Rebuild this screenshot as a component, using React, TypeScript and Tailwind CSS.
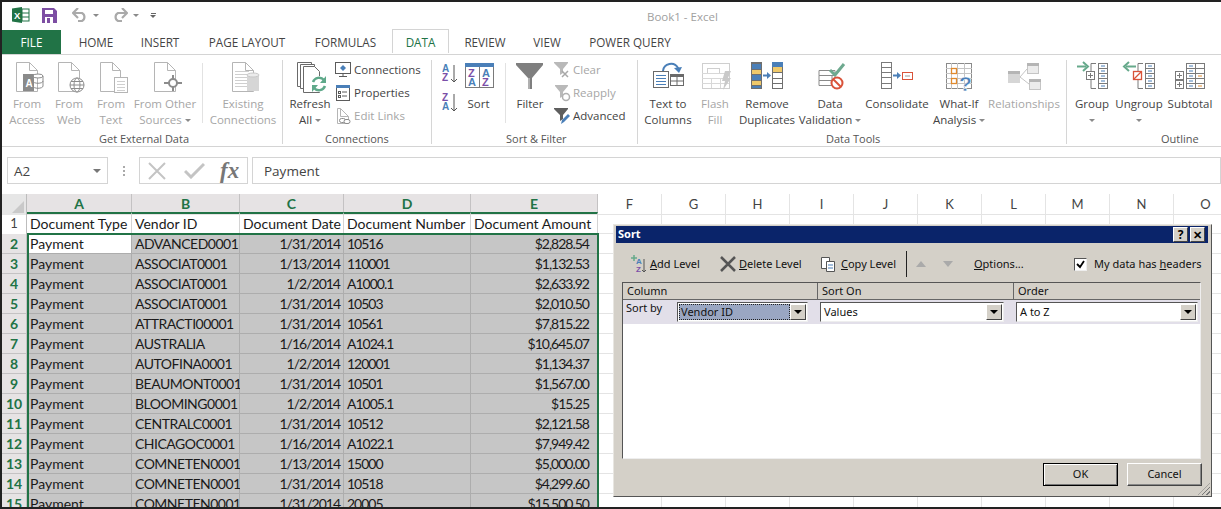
import type { ReactNode } from "react";

const ui = "font-['Open_Sans','Noto_Sans',sans-serif]";
const cell = "font-['Lato','Open_Sans',sans-serif]";
const gray = "#8c8c8c";
const line = "#b5b5b5";
const blue = "#4a7fb8";

function Ic({ children, className = "w-[44px] h-[34px]", box = "0 0 44 34" }: { children: ReactNode; className?: string; box?: string }) {
  return (
    <svg className={className} viewBox={box} fill="none">
      {children}
    </svg>
  );
}

// page with a folded corner
function Page({ x, y, w, h, c = line }: { x: number; y: number; w: number; h: number; c?: string }) {
  return (
    <g stroke={c} fill="#fff">
      <path d={`M${x + 0.5} ${y + 0.5}h${w - 8}l8 8v${h - 8}h-${w}z`} />
      <path d={`M${x + w - 7.5} ${y + 0.5}v8h8`} fill="none" />
    </g>
  );
}

function Lines({ x, y, w, n, c = "#cfcfcf", gap = 3 }: { x: number; y: number; w: number; n: number; c?: string; gap?: number }) {
  return (
    <g stroke={c}>
      {Array.from({ length: n }).map((_, i) => (
        <path key={i} d={`M${x} ${y + i * gap + 0.5}h${w}`} />
      ))}
    </g>
  );
}

function Caret({ className = "" }: { className?: string }) {
  return <span className={`inline-block w-0 h-0 border-x-[3px] border-x-transparent border-t-[3px] border-t-[#8a8a8a] ${className}`} />;
}

const FromAccess = () => (
  <Ic>
    <Page x={11} y={2} w={21} h={29} />
    <rect x="18" y="14" width="11" height="17" fill="#8a8a8a" />
    <text x="20.5" y="27" fontSize="10" fontWeight="700" fill="#fff" fontFamily="Liberation Sans">A</text>
    <ellipse cx="33" cy="16" rx="5" ry="2" fill="#fff" stroke={gray} />
    <path d="M28 16v10c0 3 10 3 10 0V16M28 21c0 3 10 3 10 0" stroke={gray} />
  </Ic>
);
const FromWeb = () => (
  <Ic>
    <Page x={11} y={2} w={21} h={29} />
    <g stroke={gray} fill="#fff">
      <circle cx="30" cy="25" r="7" />
      <ellipse cx="30" cy="25" rx="3" ry="7" />
      <path d="M23 25h14M24 21.5h12M24 28.5h12" />
    </g>
  </Ic>
);
const FromText = () => (
  <Ic>
    <Page x={11} y={2} w={20} h={29} />
    <rect x="25.5" y="17.5" width="13" height="15" fill="#fff" stroke={line} />
    <Lines x={28} y={21} w={8} n={4} />
  </Ic>
);
const FromOther = () => (
  <Ic>
    <Page x={11} y={2} w={21} h={29} />
    <circle cx="30" cy="23" r="4" fill="#fff" stroke={gray} strokeWidth="2" />
    <path d="M30 15v4M30 27v4M21 23h5M34 23h5" stroke={gray} strokeWidth="2" />
  </Ic>
);
const Existing = () => (
  <Ic>
    <Page x={11} y={2} w={21} h={29} />
    <Lines x={14} y={11} w={14} n={6} />
    <rect x="26" y="15" width="12" height="16" fill="#d6d6d6" />
    <ellipse cx="32" cy="15" rx="6" ry="2" fill="#ececec" stroke="#c8c8c8" />
  </Ic>
);
const Refresh = () => (
  <Ic>
    <g stroke="#6a6a6a" fill="#fff">
      <path d="M9.5 2.5h14v24h-14z" />
      <path d="M12.5 4.5h14v24h-14z" />
      <path d="M15.5 6.5h11l5 5v21h-16z" />
    </g>
    <circle cx="31" cy="24" r="8" fill="#fff" />
    <path d="M25 22a6.5 6.5 0 0 1 11-2" stroke="#5fa98a" strokeWidth="2.5" />
    <path d="M37 26a6.5 6.5 0 0 1-11 2" stroke="#5fa98a" strokeWidth="2.5" />
    <path d="M38 16v7h-6zM24 32v-7h6z" fill="#5fa98a" />
  </Ic>
);
const Small = ({ children }: { children: ReactNode }) => (
  <Ic className="w-[18px] h-[18px] shrink-0" box="0 0 18 18">
    {children}
  </Ic>
);
const ConnIcon = () => (
  <Small>
    <rect x="1.5" y="1.5" width="15" height="11" fill="#fff" stroke="#5b5b5b" />
    <path d="M9 4l3 3-3 3-3-3z" fill={blue} />
    <path d="M5 15.5h8" stroke="#5b5b5b" />
    <path d="M9 12.5v3" stroke="#5b5b5b" />
  </Small>
);
const PropIcon = () => (
  <Small>
    <rect x="2.5" y="1.5" width="13" height="15" fill="#fff" stroke="#5b5b5b" />
    <rect x="2" y="1" width="14" height="3" fill={blue} />
    <path d="M8 8h5M8 12h5" stroke="#5b5b5b" />
    <rect x="4.5" y="7.5" width="2" height="2" stroke="#5b5b5b" />
    <rect x="4.5" y="11.5" width="2" height="2" stroke="#5b5b5b" />
  </Small>
);
const LinksIcon = () => (
  <Small>
    <Page x={3} y={1} w={11} h={15} />
    <rect x="5.5" y="11.5" width="6" height="4" rx="2" fill="#fff" stroke={gray} />
    <rect x="10" y="12.5" width="6" height="4" rx="2" fill="#fff" stroke={gray} />
  </Small>
);
function AzIcon({ top, bottom, c1, c2 }: { top: string; bottom: string; c1: string; c2: string }) {
  return (
    <Ic className="w-[16px] h-[22px]" box="0 0 16 22">
      <text x="0" y="10" fontSize="10" fontWeight="700" fill={c1} fontFamily="Liberation Sans">{top}</text>
      <text x="0" y="19" fontSize="10" fontWeight="700" fill={c2} fontFamily="Liberation Sans">{bottom}</text>
      <path d="M12 3v17M9 17l3 3 3-3" stroke="#555" />
    </Ic>
  );
}
const SortBig = () => (
  <Ic>
    <rect x="8.5" y="3.5" width="28" height="24" fill="#fff" stroke="#7a7a7a" />
    <rect x="8" y="3" width="29" height="4" fill={blue} />
    <path d="M22.5 7v20" stroke="#7a7a7a" />
    <g fontSize="11" fontWeight="700" fontFamily="Liberation Sans">
      <text x="11" y="17" fill="#7b4fa8">Z</text>
      <text x="11" y="26" fill={blue}>A</text>
      <text x="25" y="17" fill={blue}>A</text>
      <text x="25" y="26" fill="#7b4fa8">Z</text>
    </g>
  </Ic>
);
const FilterBig = () => (
  <Ic>
    <path d="M8 3h27v2L24 18v11h-4V18L8 5z" fill="#7f7f7f" />
    <path d="M20 18h2v11h-2z" fill="#b0b0b0" />
  </Ic>
);
const ClearIcon = () => (
  <Small>
    <path d="M1 1h14v1l-5 6v4l-3 2V8L1 2z" fill="#b9b9b9" />
    <path d="M9 10l6 6M15 10l-6 6" stroke="#a8a8a8" strokeWidth="1.5" />
  </Small>
);
const ReapplyIcon = () => (
  <Small>
    <path d="M2 1h13v1l-5 6v4l-3 2V8L2 2z" fill="#b9b9b9" />
    <circle cx="13" cy="13" r="3.5" fill="#fff" stroke="#b0b0b0" strokeWidth="1.5" />
  </Small>
);
const AdvancedIcon = () => (
  <Small>
    <path d="M1 1h14v1l-5 6v4l-3 2V8L1 2z" fill="#5e5e5e" />
    <path d="M8 17l1-4 6-6 2 2-6 6z" fill={blue} />
  </Small>
);
const TextCols = () => (
  <Ic>
    <rect x="7.5" y="11.5" width="15" height="16" fill="#fff" stroke="#6a6a6a" />
    <path d="M10 15.5h10M10 18.5h10M10 21.5h10M10 24.5h10" stroke={blue} />
    <rect x="24.5" y="14.5" width="13" height="11" fill="#fff" stroke="#6a6a6a" />
    <path d="M24 14h14v3H24z" fill="#6a6a6a" />
    <path d="M31 17v8M24.5 21h13" stroke="#6a6a6a" />
    <path d="M17 11a8 8 0 0 1 15-3l1 3" stroke={blue} strokeWidth="2" />
    <path d="M28 8l5 5 3-6z" fill={blue} />
  </Ic>
);
const FlashFill = () => (
  <Ic>
    <rect x="9.5" y="3.5" width="27" height="25" fill="#fff" stroke="#cfcfcf" />
    <rect x="14.5" y="8.5" width="12" height="5" stroke="#cfcfcf" />
    <path d="M9 13.5h27M9 18.5h27M9 23.5h27M18.5 18v10M27.5 18v10" stroke="#d8d8d8" />
    <path d="M32 11h6l-3 7h3l-8 12 2-9h-3z" fill="#c9c9c9" />
  </Ic>
);
const RemoveDup = () => (
  <Ic>
    <rect x="6" y="2" width="11" height="27" fill="#6f6f6f" />
    <rect x="7" y="4" width="9" height="5" fill={blue} />
    <rect x="7" y="10" width="9" height="4" fill="#efc96b" />
    <rect x="7" y="15" width="9" height="5" fill={blue} />
    <rect x="7" y="21" width="9" height="4" fill="#efc96b" />
    <rect x="7" y="26" width="9" height="2" fill={blue} />
    <path d="M18 15.5h5" stroke={blue} strokeWidth="2" />
    <path d="M22 12l4 3.5-4 3.5z" fill={blue} />
    <rect x="27.5" y="2.5" width="10" height="26" fill="#fff" stroke="#6f6f6f" />
    <rect x="27" y="2" width="11" height="5" fill={blue} />
    <rect x="28" y="7" width="9" height="5" fill="#efc96b" />
    <path d="M27 12.5h11M27 18.5h11M27 23.5h11" stroke="#6f6f6f" />
  </Ic>
);
const Validation = () => (
  <Ic>
    <path d="M11 10.5h16v5H11zM11 15.5h13v5H11zM11 20.5h13v5H11z" fill="#fff" stroke="#8a8a8a" />
    <path d="M22 10l5 5 9-11" stroke="#6ea98f" strokeWidth="3" />
    <circle cx="29" cy="23" r="5.5" fill="#fff" stroke="#d9533a" strokeWidth="2" />
    <path d="M25 19l8 8" stroke="#d9533a" strokeWidth="2" />
  </Ic>
);
const Consolidate = () => (
  <Ic>
    <rect x="6.5" y="2.5" width="10" height="26" fill="#fff" stroke="#7a7a7a" />
    <path d="M6 7.5h11M6 12.5h11M6 17.5h11M6 23.5h11" stroke="#7a7a7a" />
    <path d="M18 15.5h5" stroke={blue} strokeWidth="2" />
    <path d="M22 12l4 3.5-4 3.5z" fill={blue} />
    <rect x="27.5" y="12.5" width="10" height="7" fill="#fff" stroke="#d9533a" />
    <path d="M30 16h5" stroke="#999" />
  </Ic>
);
const WhatIf = () => (
  <Ic>
    <rect x="9.5" y="3.5" width="25" height="25" fill="#fff" stroke="#8a8a8a" />
    <path d="M9 8.5h26M9 13.5h26M9 18.5h26M9 23.5h26M14.5 3v26M20.5 3v26M27.5 3v26" stroke="#c4c4c4" />
    <rect x="14.5" y="8.5" width="5" height="5" fill="#fff" stroke="#e08a2e" strokeWidth="1.3" />
    <rect x="14.5" y="18.5" width="5" height="5" fill="#fff" stroke="#e08a2e" strokeWidth="1.3" />
    <text x="22" y="31" fontSize="21" fontWeight="700" fill={blue} stroke="#fff" strokeWidth="0.4" fontFamily="Liberation Sans">?</text>
  </Ic>
);
const Relationships = () => (
  <Ic>
    <rect x="6" y="11" width="12" height="12" fill="#d6d6d6" />
    <rect x="6" y="11" width="12" height="3" fill="#b5b5b5" />
    <rect x="25.5" y="3.5" width="11" height="10" fill="#ececec" stroke="#c5c5c5" />
    <rect x="25" y="3" width="12" height="3" fill="#b5b5b5" />
    <rect x="27.5" y="19.5" width="11" height="10" fill="#ececec" stroke="#c5c5c5" />
    <rect x="27" y="19" width="12" height="3" fill="#b5b5b5" />
    <path d="M25 9l-7 8 9 7" stroke="#c5c5c5" />
  </Ic>
);
const Outline = ({ arrow }: { arrow: "group" | "ungroup" }) => (
  <Ic>
    <rect x="28.5" y="3.5" width="9" height="25" fill="#fff" stroke="#7a7a7a" />
    <path d="M28 8.5h10M28 13.5h10M28 18.5h10M28 23.5h10" stroke="#7a7a7a" />
    <path d="M31 6h4M31 11h4M31 16h4M31 21h4M31 26h4" stroke={blue} />
    <path d="M26 3.5h-5v8M21 19.5v9h5" stroke="#7a7a7a" />
    {arrow === "group" ? (
      <>
        <rect x="16.5" y="11.5" width="8" height="8" fill="#fff" stroke="#7a7a7a" />
        <path d="M18 15.5h5M20.5 13v5" stroke="#7a7a7a" />
        <path d="M7 6.5h9" stroke="#66a98b" strokeWidth="2" />
        <path d="M13 2l5 4.5-5 4.5" stroke="#66a98b" strokeWidth="2" />
      </>
    ) : (
      <>
        <rect x="16.5" y="11.5" width="8" height="8" fill="#fff" stroke="#d9533a" strokeWidth="1.3" />
        <path d="M17 19l7-7" stroke="#d9533a" strokeWidth="1.3" />
        <path d="M9 6.5h10" stroke="#66a98b" strokeWidth="2" />
        <path d="M12 2L7 6.5 12 11" stroke="#66a98b" strokeWidth="2" />
      </>
    )}
  </Ic>
);
const Subtotal = () => (
  <Ic>
    <rect x="7.5" y="11.5" width="8" height="8" fill="#fff" stroke="#7a7a7a" />
    <rect x="7.5" y="20.5" width="8" height="8" fill="#fff" stroke="#7a7a7a" />
    <path d="M9 15.5h5M11.5 13v5M9 24.5h5M11.5 22v5" stroke="#7a7a7a" />
    <rect x="18.5" y="3.5" width="18" height="25" fill="#fff" stroke="#7a7a7a" />
    <path d="M18 8.5h19M18 13.5h19M18 18.5h19M18 23.5h19M27.5 3v26" stroke="#7a7a7a" />
    <path d="M21 6h4M21 11h4M21 16h4M21 21h4M21 26h4" stroke={blue} />
    <path d="M30 16h4M30 26h4" stroke="#e08a2e" />
  </Ic>
);

function Big({ icon, l1, l2, w, off, caret }: { icon: ReactNode; l1: string; l2?: string; w: string; off?: boolean; caret?: boolean }) {
  return (
    <div className={`${w} shrink-0 flex flex-col items-center text-[11.5px] leading-[16px] ${off ? "text-[#a6a6a6]" : "text-[#444]"}`}>
      <div className="h-[36px] flex justify-center">{icon}</div>
      <div className="whitespace-nowrap">{l1}</div>
      <div className="whitespace-nowrap flex items-center gap-[3px] h-[16px]">
        {l2}
        {caret && <Caret />}
      </div>
    </div>
  );
}

function SmallRow({ icon, label, off }: { icon: ReactNode; label: string; off?: boolean }) {
  return (
    <div className={`h-[23px] flex items-center gap-[2px] text-[11.5px] whitespace-nowrap ${off ? "text-[#a6a6a6]" : "text-[#444]"}`}>
      {icon}
      {label}
    </div>
  );
}

function Group({ w, label, pos, children }: { w: string; label: string; pos: string; children: ReactNode }) {
  return (
    <div className={`${w} shrink-0 h-full flex flex-col border-r border-[#d6d6d6]`}>
      <div className="h-[69px] flex">{children}</div>
      <div className={`${pos} text-[11px] leading-[16px] mt-[3px] text-[#555] whitespace-nowrap`}>{label}</div>
    </div>
  );
}

const Tab = ({ w, label, className = "" }: { w: string; label: string; className?: string }) => (
  <div className={`${w} h-full flex items-center justify-center pt-[2px] ${className}`}>{label}</div>
);

const Sep = () => <div className="w-px h-[60px] mt-[3px] bg-[#e2e2e2] shrink-0" />;

const cols = ["A", "B", "C", "D", "E", "F", "G", "H", "I", "J", "K", "L", "M", "N", "O"];
const rows = [
  ["ADVANCED0001", "1/31/2014", "10516", "$2,828.54"],
  ["ASSOCIAT0001", "1/13/2014", "110001", "$1,132.53"],
  ["ASSOCIAT0001", "1/2/2014", "A1000.1", "$2,633.92"],
  ["ASSOCIAT0001", "1/31/2014", "10503", "$2,010.50"],
  ["ATTRACTI00001", "1/31/2014", "10561", "$7,815.22"],
  ["AUSTRALIA", "1/16/2014", "A1024.1", "$10,645.07"],
  ["AUTOFINA0001", "1/2/2014", "120001", "$1,134.37"],
  ["BEAUMONT0001", "1/31/2014", "10501", "$1,567.00"],
  ["BLOOMING0001", "1/2/2014", "A1005.1", "$15.25"],
  ["CENTRALC0001", "1/31/2014", "10512", "$2,121.58"],
  ["CHICAGOC0001", "1/16/2014", "A1022.1", "$7,949.42"],
  ["COMNETEN0001", "1/13/2014", "15000", "$5,000.00"],
  ["COMNETEN0001", "1/31/2014", "10518", "$4,299.60"],
  ["COMNETEN0001", "1/31/2014", "20005", "$15,500.50"],
];
const template = "grid grid-cols-[25px_105px_108px_104px_127px_127px_64px_64px_64px_64px_64px_64px_64px_64px_64px_64px]";

function Sheet() {
  return (
    <div className={`relative flex-1 overflow-hidden ${cell} text-[14px] text-[#1a1a1a]`}>
      <div className={`${template} h-[19px] leading-[20px] text-[13px]`}>
        <div className="bg-[#e6e6e6] border-r border-[#bdbdbd] relative">
          <div className="absolute right-[2px] bottom-[2px] w-0 h-0 border-l-[12px] border-l-transparent border-b-[12px] border-b-[#c9c9c9]" />
        </div>
        {cols.map((c, i) => (
          <div
            key={c}
            className={
              i < 5
                ? "bg-[#e6e3e4] border-r border-[#c4c2c3] text-center font-bold text-[#217346] text-[14px]"
                : "border-r border-[#e4e4e4] border-b text-center text-[#444]"
            }
          >
            {c}
          </div>
        ))}
      </div>
      <div className={`${template} h-[21px] leading-[20px]`}>
        <div className="border-r border-[#bdbdbd] bg-white text-center text-[#444] text-[13px]">1</div>
        {["Document Type", "Vendor ID", "Document Date", "Document Number", "Document Amount"].map((t) => (
          <div key={t} className="border-t-2 border-t-[#217346] border-r border-[#d4d4d4] pl-[3px] whitespace-nowrap overflow-hidden -mt-px">
            {t}
          </div>
        ))}
        {cols.slice(5).map((c) => (
          <div key={c} className="border-r border-b border-[#e4e4e4]" />
        ))}
      </div>
      {rows.map((r, i) => (
        <div key={i} className={`${template} h-[20px] leading-[19px]`}>
          <div className="bg-[#e6e3e4] border-r border-b border-[#c4c2c3] text-center font-bold text-[#217346] text-[14px]">{i + 2}</div>
          <div className={`${i === 0 ? "bg-white" : "bg-[#c6c6c6]"} border-r border-b border-[#adadad] pl-[3px]`}>Payment</div>
          <div className="bg-[#c6c6c6] border-r border-b border-[#adadad] pl-[3px] whitespace-nowrap tracking-[-0.5px]">{r[0]}</div>
          <div className="bg-[#c6c6c6] border-r border-b border-[#adadad] pr-[3px] text-right tracking-[-1px]">{r[1]}</div>
          <div className="bg-[#c6c6c6] border-r border-b border-[#adadad] pl-[3px] tracking-[-1px]">{r[2]}</div>
          <div className="bg-[#c6c6c6] border-r border-b border-[#adadad] pr-[8px] text-right tracking-[-1px]">{r[3]}</div>
          {cols.slice(5).map((c) => (
            <div key={c} className="border-r border-b border-[#e4e4e4]" />
          ))}
        </div>
      ))}
      {/* selection border */}
      <div className="absolute left-[25px] top-[39px] w-[572px] h-[400px] border-2 border-[#217346] pointer-events-none" />
    </div>
  );
}

const Under = ({ children }: { children: string }) => <span className="underline">{children}</span>;

function Combo({ w, label, focus }: { w: string; label: string; focus?: boolean }) {
  return (
    <div className={`${w} h-[20px] bg-white border border-t-[#555] border-l-[#555] border-r-[#eee] border-b-[#eee] flex items-center p-px`}>
      <div className={`flex-1 h-full pl-[2px] leading-[15px] ${focus ? "bg-[#9aa6c2] outline-1 outline-dotted outline-[#222] -outline-offset-1" : ""}`}>{label}</div>
      <div className="w-[16px] h-full bg-[#d4d0c8] border border-t-white border-l-white border-r-[#444] border-b-[#444] flex items-center justify-center">
        <span className="w-0 h-0 border-x-[4px] border-x-transparent border-t-[4px] border-t-black" />
      </div>
    </div>
  );
}

function DlgBtn({ label, def }: { label: string; def?: boolean }) {
  return (
    <div className={`w-[75px] h-[23px] bg-[#d4d0c8] flex items-center justify-center ${def ? "border border-black shadow-[inset_1px_1px_0_#fff,inset_-1px_-1px_0_#777]" : "border border-t-white border-l-white border-r-[#444] border-b-[#444] shadow-[inset_-1px_-1px_0_#888]"}`}>
      {label}
    </div>
  );
}

function SortDialog() {
  return (
    <div className="absolute left-[611px] top-[222px] w-[599px] h-[273px] bg-[#d4d0c8] border border-t-[#e8e6e1] border-l-[#e8e6e1] border-r-[#555] border-b-[#555] p-[1px] flex flex-col text-[11px] text-[#111] font-['Noto_Sans',sans-serif]">
      <div className="h-[17px] ml-px mr-[2px] bg-[#0a246a] flex items-center justify-between pl-[2px] pr-[3px] text-white font-bold shrink-0">
        <span>Sort</span>
        <div className="flex gap-[2px]">
          <div className="w-[15px] h-[15px] bg-[#d4d0c8] border border-t-white border-l-white border-r-[#444] border-b-[#444] flex items-center justify-center text-black text-[12px] font-bold leading-none">?</div>
          <div className="w-[15px] h-[15px] bg-[#d4d0c8] border border-t-white border-l-white border-r-[#444] border-b-[#444] flex items-center justify-center text-black text-[11px] font-bold leading-none">✕</div>
        </div>
      </div>
      <div className="h-[36px] mt-[3px] flex items-center shrink-0 pl-[16px] whitespace-nowrap">
        <Ic className="w-[16px] h-[18px]" box="0 0 16 18">
          <path d="M3 0v6M0 3h6" stroke="#66a98b" strokeWidth="1.5" />
          <text x="5" y="9" fontSize="8" fontWeight="700" fill={blue} fontFamily="Liberation Sans">A</text>
          <text x="5" y="17" fontSize="8" fontWeight="700" fill="#7b4fa8" fontFamily="Liberation Sans">Z</text>
          <path d="M13 4v13M11 15l2 2 2-2" stroke="#555" />
        </Ic>
        <span className="ml-[3px] w-[70px]"><Under>A</Under>dd Level</span>
        <Ic className="w-[16px] h-[16px]" box="0 0 16 16">
          <path d="M1 1l14 14M15 1L1 15" stroke="#555" strokeWidth="2.5" />
        </Ic>
        <span className="ml-[3px] w-[81px]"><Under>D</Under>elete Level</span>
        <Ic className="w-[16px] h-[16px]" box="0 0 16 16">
          <path d="M1.5 1.5h8v11h-8z" fill="#fff" stroke="#555" />
          <path d="M6.5 5.500h8v10h-8z" fill="#fff" stroke="#555" />
          <path d="M8 9h5M8 12h5" stroke={blue} />
        </Ic>
        <span className="ml-[5px] w-[65px]"><Under>C</Under>opy Level</span>
        <div className="w-px h-[26px] bg-[#222]" />
        <span className="ml-[9px] w-0 h-0 border-x-[5px] border-x-transparent border-b-[6px] border-b-[#aaa]" />
        <span className="ml-[17px] w-0 h-0 border-x-[5px] border-x-transparent border-t-[6px] border-t-[#aaa]" />
        <span className="ml-[21px] w-[100px]"><Under>O</Under>ptions...</span>
        <div className="w-[13px] h-[13px] bg-white border border-t-[#555] border-l-[#555] border-r-[#eee] border-b-[#eee] flex items-center justify-center">
          <Ic className="w-[9px] h-[9px]" box="0 0 9 9">
            <path d="M1 4l3 3 4-6" stroke="#000" strokeWidth="1.8" />
          </Ic>
        </div>
        <span className="ml-[7px]">My data has <Under>h</Under>eaders</span>
      </div>
      <div className="ml-[7px] mr-[9px] h-[177px] bg-white border border-t-[#555] border-l-[#555] border-r-[#eee] border-b-[#eee] shrink-0">
        <div className="h-[17px] flex bg-[#d4d0c8] leading-[16px]">
          <div className="w-[195px] pl-[4px] border-r border-b border-r-[#666] border-b-[#666]">Column</div>
          <div className="w-[196px] pl-[4px] border-r border-b border-r-[#666] border-b-[#666]">Sort On</div>
          <div className="flex-1 pl-[4px] border-b border-[#666]">Order</div>
        </div>
        <div className="h-[24px] flex items-center bg-[#e2dfe9] leading-[15px]">
          <div className="w-[54px] pl-[3px] self-start">Sort by</div>
          <Combo w="w-[131px]" label="Vendor ID" focus />
          <div className="w-[12px]" />
          <Combo w="w-[184px]" label="Values" />
          <div className="w-[12px]" />
          <Combo w="w-[182px]" label="A to Z" />
        </div>
      </div>
      <div className="flex justify-end gap-[9px] mt-[4px] pr-[8px]">
        <DlgBtn label="OK" def />
        <DlgBtn label="Cancel" />
      </div>
      <div className="absolute right-[1px] bottom-[1px] w-[12px] h-[12px] bg-[repeating-linear-gradient(135deg,transparent_0,transparent_2px,#777_2px,#777_3px)] [clip-path:polygon(100%_0,100%_100%,0_100%)]" />
    </div>
  );
}

export default function App() {
  return (
    <div className={`relative w-[1221px] h-[509px] overflow-hidden bg-white border-t-2 border-l-2 border-b-2 border-[#222] flex flex-col ${ui}`}>
      {/* title bar */}
      <div className="h-[28px] shrink-0 flex items-center pl-[10px] -mt-px">
        <Ic className="w-[18px] h-[16px]" box="0 0 18 16">
          <rect x="7" y="2" width="10" height="12" fill="#fff" stroke="#217346" />
          <path d="M10 2v12M7 6h10M7 10h10" stroke="#217346" />
          <path d="M0 1.5L10 0v16L0 14.5z" fill="#217346" />
          <text x="2" y="12" fontSize="9.5" fontWeight="700" fill="#fff" fontFamily="Liberation Sans">X</text>
        </Ic>
        <Ic className="w-[15px] h-[15px] ml-[12px]" box="0 0 15 15">
          <path d="M0 0h12l3 3v12H0z" fill="#7d4ea3" />
          <rect x="3" y="2" width="8" height="4" fill="#fff" />
          <rect x="3" y="9" width="8" height="6" fill="#fff" />
          <rect x="5" y="10" width="3" height="5" fill="#7d4ea3" />
        </Ic>
        <Ic className="w-[16px] h-[14px] ml-[15px]" box="0 0 16 14">
          <path d="M2 5h8a4.5 4.5 0 0 1 0 8H6" stroke="#aaa" strokeWidth="2.2" />
          <path d="M6 0L1 5l5 5" stroke="#aaa" strokeWidth="2.2" />
        </Ic>
        <Caret className="ml-[5px]" />
        <Ic className="w-[16px] h-[14px] ml-[13px]" box="0 0 16 14">
          <path d="M14 5H6a4.5 4.5 0 0 0 0 8h4" stroke="#aaa" strokeWidth="2.2" />
          <path d="M10 0l5 5-5 5" stroke="#aaa" strokeWidth="2.2" />
        </Ic>
        <Caret className="ml-[5px]" />
        <div className="ml-[11px] flex flex-col items-center gap-[1px]">
          <div className="w-[5px] h-px bg-[#666]" />
          <Caret className="border-t-[#666]" />
        </div>
        <div className="ml-[491px] mt-[4px] text-[11.5px] text-[#a0a0a0]">Book1 - Excel</div>
      </div>
      {/* tabs */}
      <div className="h-[25px] mt-px shrink-0 flex text-[11.7px] text-[#444] border-b border-[#d4d4d4]">
        <Tab w="w-[59px]" label="FILE" className="bg-[#217346] text-white" />
        <Tab w="w-[70px]" label="HOME" />
        <Tab w="w-[58px]" label="INSERT" />
        <Tab w="w-[116px]" label="PAGE LAYOUT" />
        <Tab w="w-[81px]" label="FORMULAS" />
        <div className="w-[6px]" />
        <Tab w="w-[57px]" label="DATA" className="text-[#217346] bg-white border border-b-0 border-[#d4d4d4] h-[25px] -mt-px relative" />
        <Tab w="w-[72px]" label="REVIEW" />
        <Tab w="w-[52px]" label="VIEW" />
        <Tab w="w-[114px]" label="POWER QUERY" />
      </div>
      {/* ribbon */}
      <div className="h-[92px] shrink-0 flex pt-[5px] pb-[2px] border-b border-[#d4d4d4] pl-[4px]">
        <Group w="w-[277px]" label="Get External Data" pos="text-center">
          <Big w="w-[42px]" icon={<FromAccess />} l1="From" l2="Access" off />
          <Big w="w-[42px]" icon={<FromWeb />} l1="From" l2="Web" off />
          <Big w="w-[42px]" icon={<FromText />} l1="From" l2="Text" off />
          <Big w="w-[66px]" icon={<FromOther />} l1="From Other" l2="Sources" off caret />
          <div className="w-[4px]" />
          <Sep />
          <div className="w-[3px]" />
          <Big w="w-[74px]" icon={<Existing />} l1="Existing" l2="Connections" off />
        </Group>
        <Group w="w-[149px]" label="Connections" pos="pl-[42px]">
          <div className="w-[3px]" />
          <Big w="w-[48px]" icon={<Refresh />} l1="Refresh" l2="All" caret />
          <div className="-mt-[2px]">
            <SmallRow icon={<ConnIcon />} label="Connections" />
            <SmallRow icon={<PropIcon />} label="Properties" />
            <SmallRow icon={<LinksIcon />} label="Edit Links" off />
          </div>
        </Group>
        <Group w="w-[206px]" label="Sort & Filter" pos="pl-[74px]">
          <div className="w-[10px] shrink-0" />
          <div className="w-[16px] shrink-0 flex flex-col gap-[7px] pt-[2px]">
            <AzIcon top="A" bottom="Z" c1={blue} c2="#7b4fa8" />
            <AzIcon top="Z" bottom="A" c1="#7b4fa8" c2={blue} />
          </div>
          <div className="-ml-[3px]" />
          <Big w="w-[47px]" icon={<SortBig />} l1="Sort" />
          <div className="w-[3px]" />
          <Sep />
          <Big w="w-[48px]" icon={<FilterBig />} l1="Filter" />
          <div className="-mt-[2px] -ml-[1px]">
            <SmallRow icon={<ClearIcon />} label="Clear" off />
            <SmallRow icon={<ReapplyIcon />} label="Reapply" off />
            <SmallRow icon={<AdvancedIcon />} label="Advanced" />
          </div>
        </Group>
        <Group w="w-[429px]" label="Data Tools" pos="pl-[188px]">
          <div className="w-[6px]" />
          <Big w="w-[48px]" icon={<TextCols />} l1="Text to" l2="Columns" />
          <div className="w-[2px]" />
          <Big w="w-[42px]" icon={<FlashFill />} l1="Flash" l2="Fill" off />
          <div className="w-[1px]" />
          <Big w="w-[60px]" icon={<RemoveDup />} l1="Remove" l2="Duplicates" />
          <Big w="w-[66px]" icon={<Validation />} l1="Data" l2="Validation" caret />
          <Big w="w-[68px]" icon={<Consolidate />} l1="Consolidate" />
          <Big w="w-[56px]" icon={<WhatIf />} l1="What-If" l2="Analysis" caret />
          <Big w="w-[74px]" icon={<Relationships />} l1="Relationships" off />
        </Group>
        <div className="flex-1 flex flex-col h-full">
          <div className="h-[69px] flex pl-[1px]">
            <Big w="w-[48px]" icon={<Outline arrow="group" />} l1="Group" caret />
            <Big w="w-[46px]" icon={<Outline arrow="ungroup" />} l1="Ungroup" caret />
            <Big w="w-[56px]" icon={<Subtotal />} l1="Subtotal" />
          </div>
          <div className="text-[11px] leading-[16px] mt-[3px] text-[#555] pl-[94px]">Outline</div>
        </div>
      </div>
      {/* formula bar */}
      <div className="h-[27px] mt-[10px] shrink-0 flex text-[13.5px] text-[#444]">
        <div className="ml-[5px] w-[101px] border border-[#d4d4d4] flex items-center justify-between pl-[6px] pr-[6px] pt-px">
          A2
          <span className="w-0 h-0 border-x-[4px] border-x-transparent border-t-[4px] border-t-[#777]" />
        </div>
        <div className="w-[31px] flex flex-col items-center justify-center gap-[2px]">
          <div className="w-[2px] h-[2px] bg-[#aaa]" />
          <div className="w-[2px] h-[2px] bg-[#aaa]" />
          <div className="w-[2px] h-[2px] bg-[#aaa]" />
        </div>
        <div className="w-[109px] border border-[#d4d4d4] flex items-center pl-[8px]">
          <Ic className="w-[18px] h-[18px]" box="0 0 18 18">
            <path d="M1 1l16 16M17 1L1 17" stroke="#c4c4c4" strokeWidth="2" />
          </Ic>
          <Ic className="w-[21px] h-[17px] ml-[18px]" box="0 0 21 17">
            <path d="M1 9l6 6L20 2" stroke="#c4c4c4" strokeWidth="3" />
          </Ic>
          <span className="font-['Liberation_Serif',serif] italic font-bold text-[23px] leading-none text-[#777] ml-[15px]">fx</span>
        </div>
        <div className="ml-[4px] flex-1 border border-[#d4d4d4] flex items-center pl-[11px] pt-px">Payment</div>
      </div>
      <div className="h-[10px] shrink-0" />
      <Sheet />
      <SortDialog />
    </div>
  );
}
